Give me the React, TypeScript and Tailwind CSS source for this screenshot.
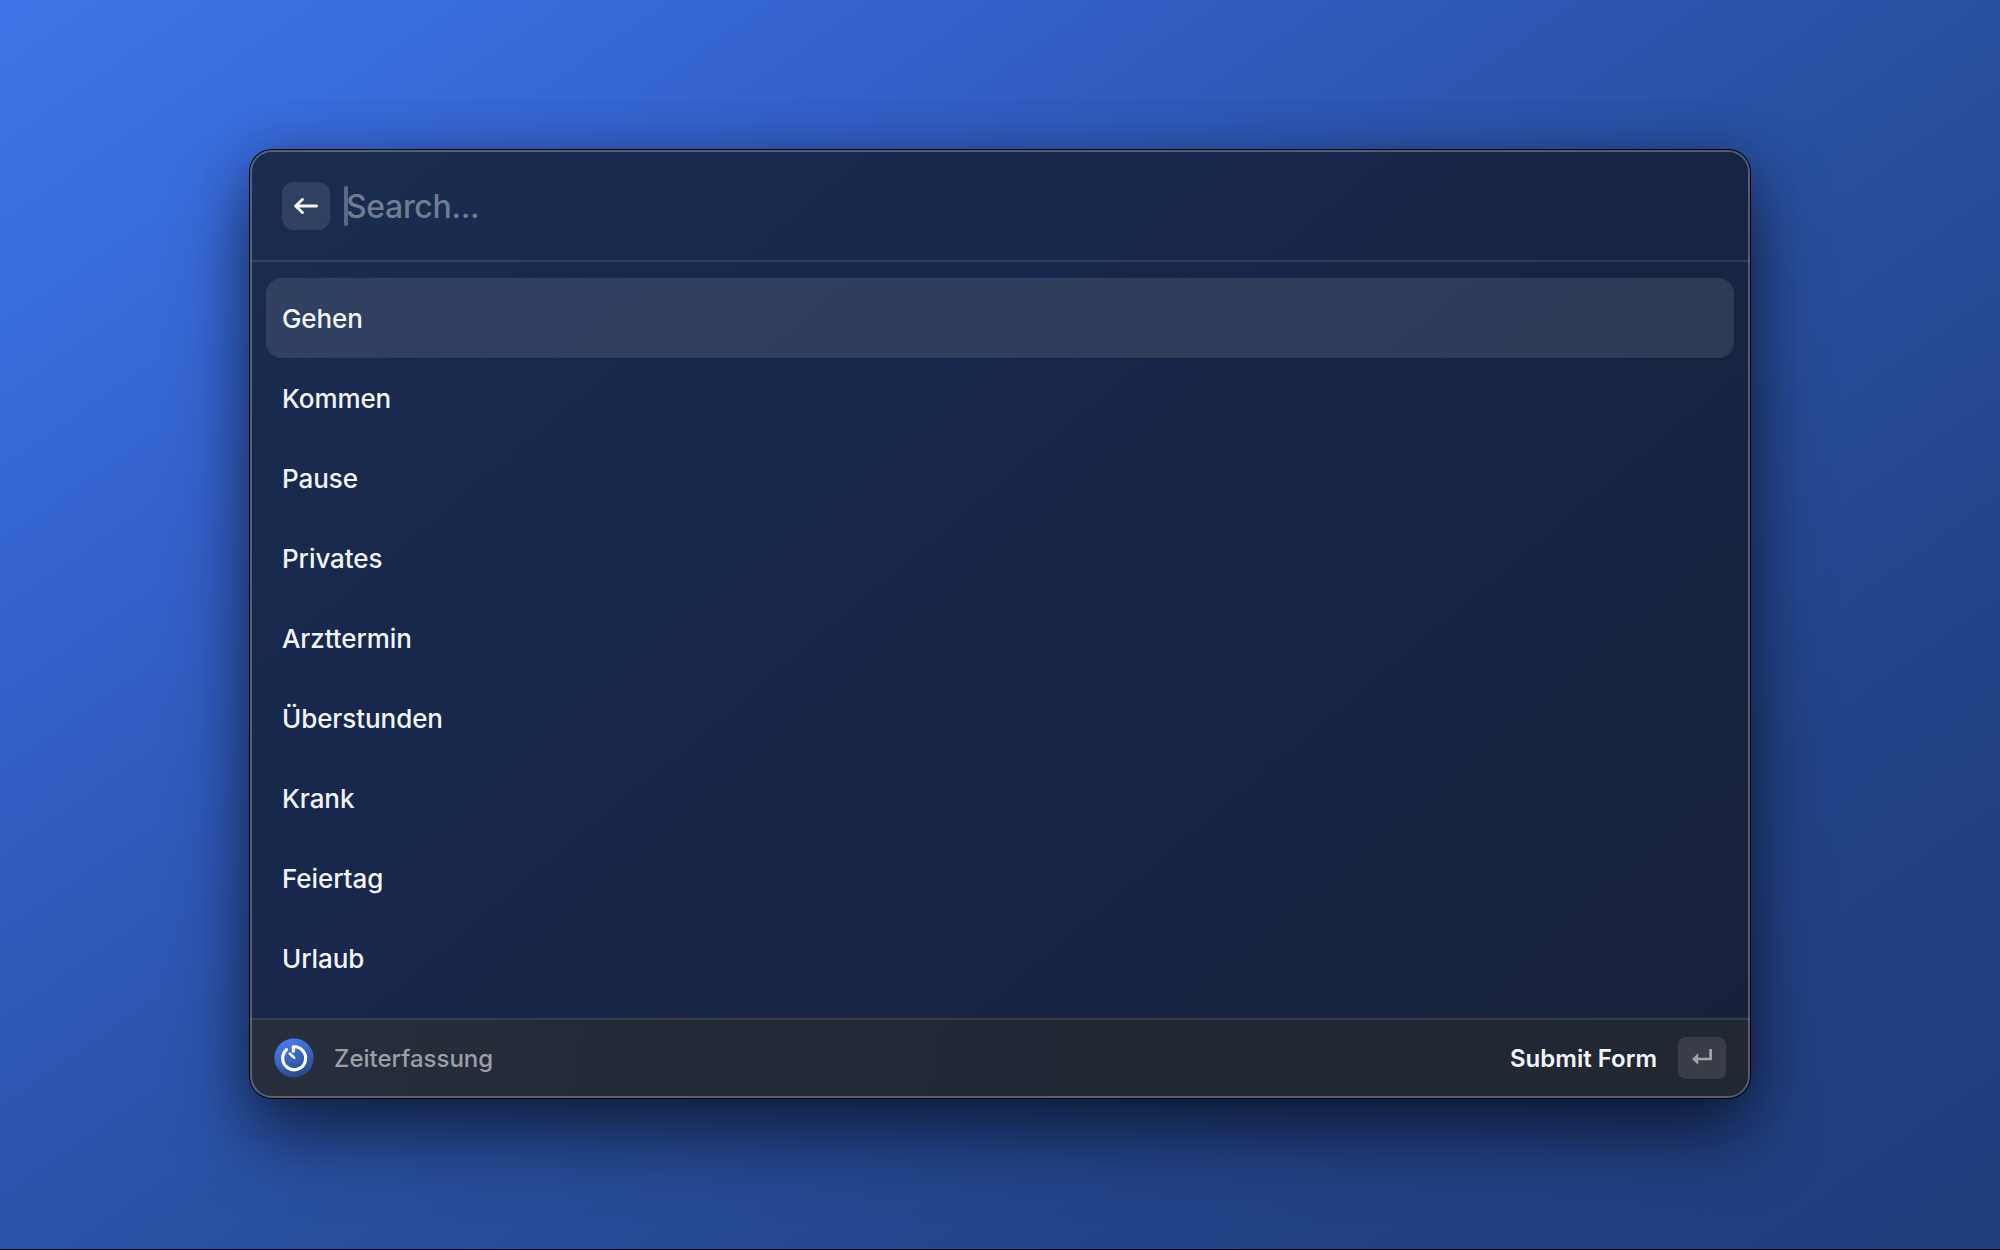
const items = ["Gehen", "Kommen", "Pause", "Privates", "Arzttermin", "Überstunden", "Krank", "Feiertag", "Urlaub"];

function BackIcon() {
  return (
    <svg width="24" height="16" viewBox="0 0 24 16" fill="none" stroke="#f4f4f5" strokeWidth="3" strokeLinecap="round" strokeLinejoin="round">
      <path d="M22.5 8H1.7M8.4 1.5L1.7 8l6.7 6.5" />
    </svg>
  );
}

function TimerIcon() {
  return (
    <svg width="40" height="40" viewBox="0 0 40 40" fill="none" className="shrink-0">
      <defs>
        <linearGradient id="disc" x1="12" y1="0" x2="27" y2="40" gradientUnits="userSpaceOnUse">
          <stop stopColor="#4a80f5" />
          <stop offset="1" stopColor="#284689" />
        </linearGradient>
      </defs>
      <circle cx="20" cy="20" r="19.6" fill="url(#disc)" />
      <path d="M19.3 13.2V8.8a11.5 11.5 0 1 1-6.8 2.9" stroke="#fff" strokeWidth="3.2" strokeLinejoin="round" strokeLinecap="round" />
      <path d="M15.8 15.6l4.4 4.2" stroke="#fff" strokeWidth="2.6" strokeLinecap="round" />
    </svg>
  );
}

function ReturnIcon() {
  return (
    <svg width="20" height="18" viewBox="0 0 20 18" fill="none">
      <path d="M18.6 0v10H5" stroke="#a2a5ab" strokeWidth="2.7" />
      <path d="M0 10l6.2-5.7v11.4z" fill="#a2a5ab" />
    </svg>
  );
}

export default function App() {
  return (
    <div className="flex h-[1250px] w-[2000px] justify-center overflow-hidden border-b border-[#030713] bg-[linear-gradient(145deg,#3f75e8_0%,#396cdc_12%,#3360c8_27%,#2c55ae_44%,#284e9c_56%,#234388_76%,#203d7d_100%)] pt-[150px] font-['Inter',sans-serif] antialiased">
      <div className="relative flex h-[948px] w-[1500px] flex-col overflow-hidden rounded-[22px] bg-[linear-gradient(140deg,#1a2c50_0%,#18284d_30%,#172442_65%,#18213a_100%)] shadow-[0_0_0_1px_#000,0_36px_72px_rgba(0,0,0,0.56),0_0_50px_rgba(0,0,0,0.18)]">
        <header className="flex h-[112px] shrink-0 items-center border-b-2 border-white/10 pt-[2px] pl-8">
          <button className="flex size-12 items-center justify-center rounded-xl bg-white/10">
            <BackIcon />
          </button>
          <span className="ml-[14px] h-10 w-1 rounded-[2px] bg-[#5d6984]" />
          <span className="-ml-[2px] pt-[2px] text-[32px] leading-10 font-[450] tracking-[-0.35px] text-[#717c91]">Search...</span>
        </header>
        <ul className="flex-1 px-4 pt-4">
          {items.map((item, i) => (
            <li
              key={item}
              className={`flex h-20 items-center rounded-2xl px-4 text-[26px] font-medium tracking-[-0.08px] text-[#f3f4f6] ${i === 0 ? "bg-white/10" : ""}`}
            >
              {item}
            </li>
          ))}
        </ul>
        <footer className="flex h-20 shrink-0 items-center border-t-2 border-[#363e4e] bg-[linear-gradient(100deg,#272e3d_0%,#222835_35%,#222734_100%)] px-6 pb-[2px]">
          <TimerIcon />
          <span className="ml-5 pt-[2px] text-[24px] font-medium text-[#9b9fa6]">Zeiterfassung</span>
          <span className="ml-auto pt-[2px] text-[24px] font-semibold text-[#f3f4f5]">Submit Form</span>
          <span className="ml-[21px] flex h-[42px] w-12 items-center justify-center rounded-lg bg-white/10">
            <ReturnIcon />
          </span>
        </footer>
        <div className="pointer-events-none absolute inset-0 rounded-[22px] border-2 border-white/25" />
      </div>
    </div>
  );
}
